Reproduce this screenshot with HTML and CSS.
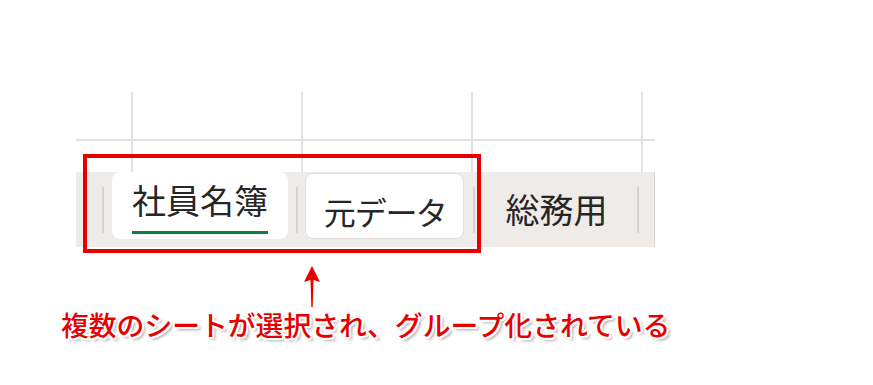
FILE: index.html
```html
<!DOCTYPE html>
<html lang="ja">
<head>
<meta charset="utf-8">
<link rel="stylesheet" href="styles.css">
</head>
<body>
    <div class="page">
        <div class="sheet">
            <div class="grid">
                <div class="cell top w1"></div>
                <div class="cell top"></div>
                <div class="cell top"></div>
                <div class="cell top"></div>
                <div class="cell top last"></div>
                <div class="cell w1"></div>
                <div class="cell"></div>
                <div class="cell"></div>
                <div class="cell"></div>
                <div class="cell last"></div>
            </div>

            <div class="tabbar">
                <span class="sep first"></span>
                <div class="tab active"><span class="label">社員名簿</span></div>
                <span class="sep"></span>
                <div class="tab grouped"><span class="label">元データ</span></div>
                <span class="sep"></span>
                <div class="tab plain"><span class="label">総務用</span></div>
                <span class="sep"></span>
            </div>
        </div>

        <div class="highlight"></div>

        <div class="note">
            <svg class="arrow" width="20" height="42" viewBox="0 0 20 42">
                <polygon points="10,0 2,16 8.5,14 9.3,41 10.7,41 11.5,14 18,16" fill="#e60000" />
            </svg>
            <p class="caption">複数のシートが選択され、グループ化されている</p>
        </div>
    </div>
</body>
</html>
```

FILE: styles.css
```css
body {
    margin: 0;
    background: #fff;
    font-family: "Noto Sans CJK JP", "Noto Sans", sans-serif;
}

.page {
    position: relative;
    width: 873px;
    height: 385px;
    padding-top: 92px;
    box-sizing: border-box;
}

.sheet {
    margin-left: 76px;
    width: 579px;
}

.grid {
    display: grid;
    grid-template-columns: 57px 170px 170px 170px 12px;
    grid-template-rows: 49px 31px;
}

.cell {
    border-right: 2px solid #e1e1e1;
}

.cell.top {
    border-bottom: 2px solid #e1e1e1;
}

.cell.last {
    border-right: none;
}

.tabbar {
    display: flex;
    align-items: flex-start;
    height: 75px;
    background: #eeebe8;
    border-right: 1px solid #d8d4d0;
    box-sizing: border-box;
}

.sep {
    width: 2px;
    height: 46px;
    margin-top: 15px;
    background: #d6d3d0;
}

.sep.first {
    margin-left: 26px;
}

.tab {
    display: flex;
    justify-content: center;
    align-items: flex-start;
    box-sizing: border-box;
    color: #262626;
    font-size: 34px;
    line-height: 34px;
    font-feature-settings: "palt";
}

.tab .label {
    display: block;
    height: 34px;
}

.tab.active {
    width: 176px;
    height: 67px;
    margin: 0 8px 0 8px;
    padding-top: 11px;
    background: #fff;
    border-radius: 8px;
}

.tab.active .label {
    padding-bottom: 14px;
    border-bottom: 3px solid #107c41;
}

.tab.grouped {
    width: 159px;
    height: 66px;
    margin: 1px 9px 0 7px;
    padding-top: 20px;
    font-size: 32px;
    background: #fff;
    border: 1px solid #e2dfdc;
    border-radius: 8px;
}

.tab.plain {
    width: 161px;
    padding-top: 20px;
    margin-left: 1px;
}

.highlight {
    position: absolute;
    left: 83px;
    top: 154px;
    width: 398px;
    height: 99px;
    border: 4px solid #e60000;
    box-sizing: border-box;
}

.note {
    display: flex;
    flex-direction: column;
}

.arrow {
    display: block;
    margin: 19px 0 0 302px;
}

.caption {
    margin: 1px 0 0 61px;
    font-size: 27.8px;
    line-height: 30px;
    font-weight: 500;
    color: #e60000;
    text-shadow:
        2px 0 #fff, -2px 0 #fff, 0 2px #fff, 0 -2px #fff,
        1.5px 1.5px #fff, -1.5px -1.5px #fff, 1.5px -1.5px #fff, -1.5px 1.5px #fff,
        3px 3px 3px rgba(0, 0, 0, 0.35);
}
```
